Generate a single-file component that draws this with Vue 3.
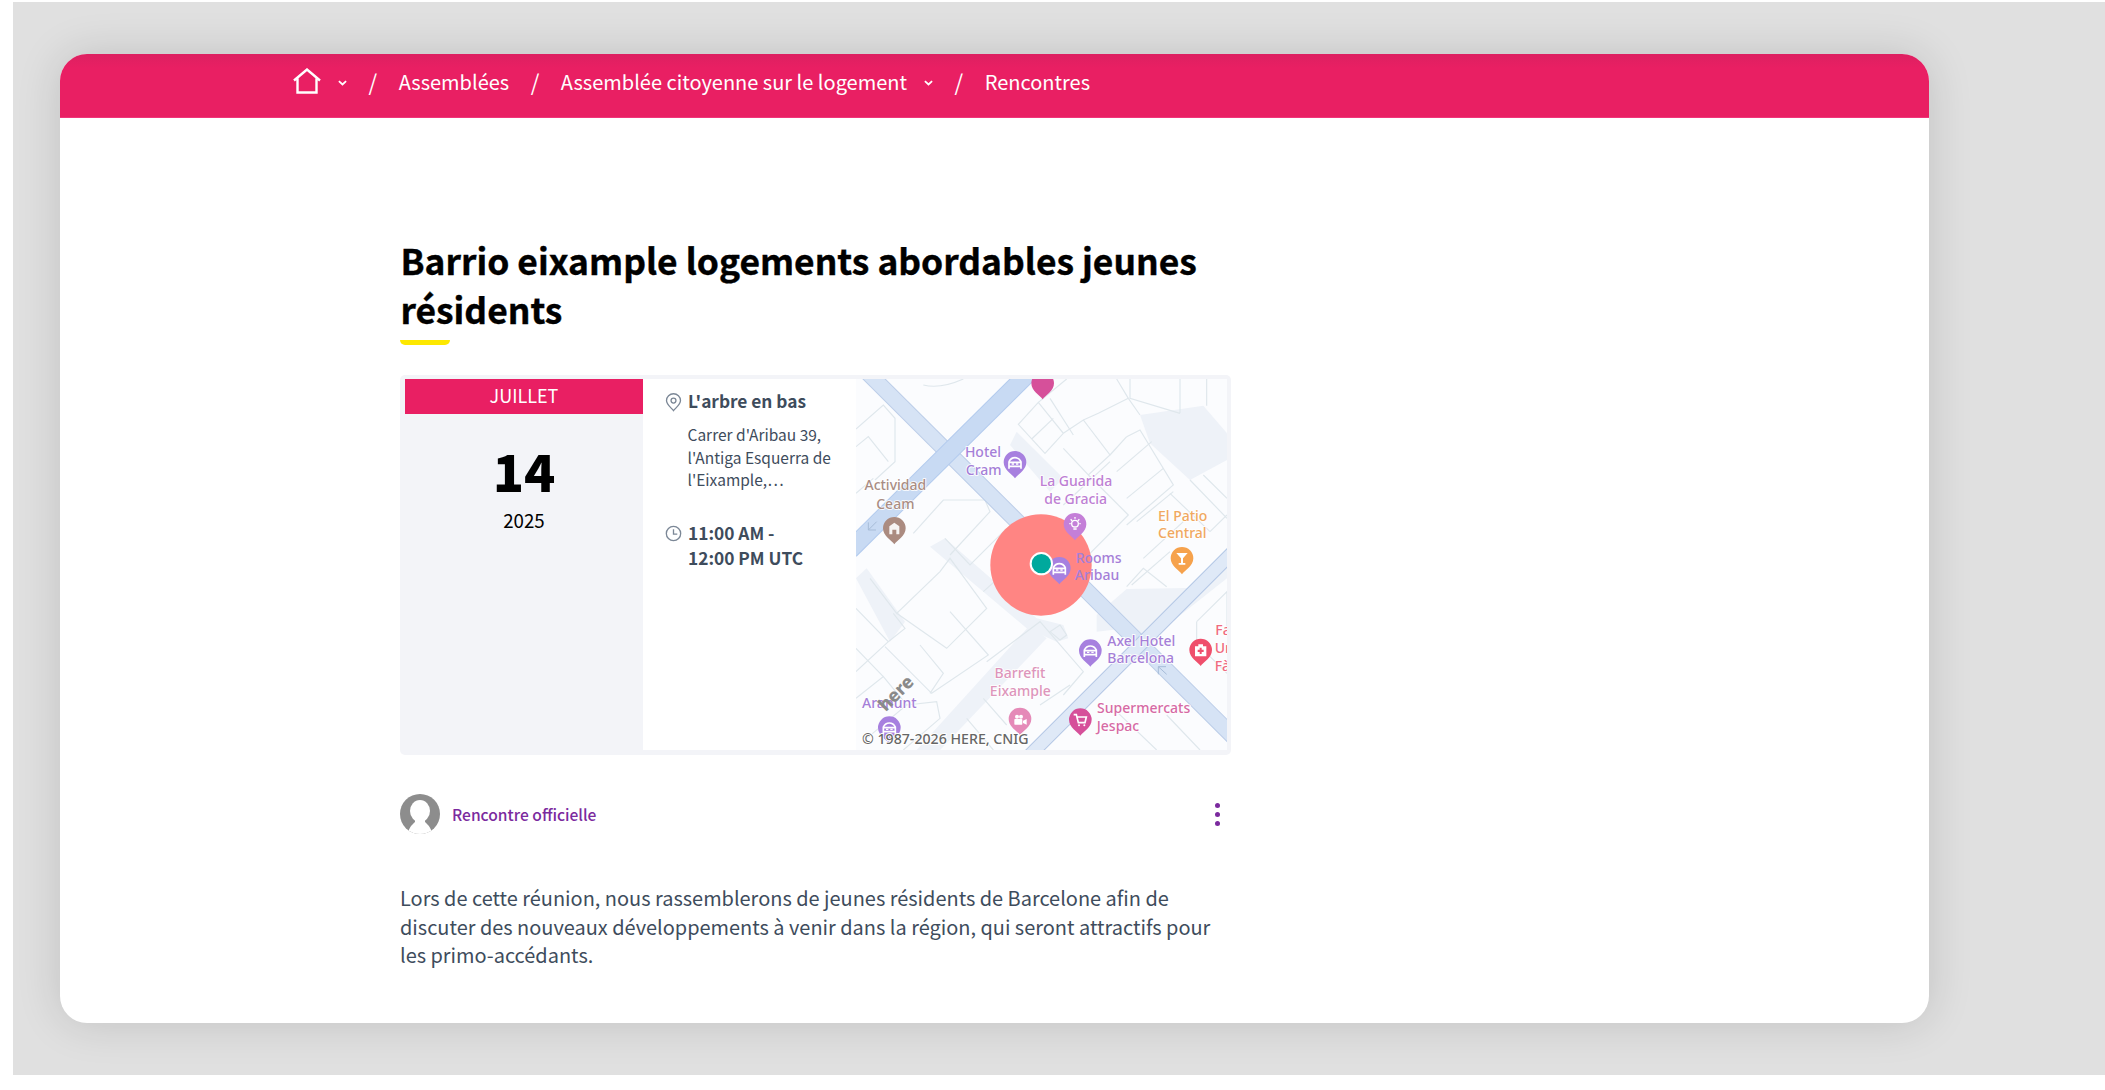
<script setup>
const pins = [
  { x: 578, y: 55, c: '#d6509a', icon: 'none' },
  { x: 495, y: 292, c: '#a780df', icon: 'bed' },
  { x: 133, y: 490, c: '#ab8b80', icon: 'house' },
  { x: 675, y: 478, c: '#c47fd8', icon: 'bulb' },
  { x: 628, y: 610, c: '#a780df', icon: 'bed' },
  { x: 996, y: 580, c: '#f6a24c', icon: 'glass' },
  { x: 721, y: 857, c: '#a780df', icon: 'bed' },
  { x: 1052, y: 855, c: '#ef4f6c', icon: 'med' },
  { x: 510, y: 1062, c: '#e58ab8', icon: 'cam' },
  { x: 691, y: 1064, c: '#d6509a', icon: 'cart' },
  { x: 118, y: 1088, c: '#a780df', icon: 'bed' }
]
const labels = [
  { t: 'Hotel', x: 399, y: 277, c: '#a57fd8' },
  { t: 'Cram', x: 401, y: 331, c: '#a57fd8' },
  { t: 'Actividad', x: 136, y: 376, c: '#a98d84' },
  { t: 'Ceam', x: 136, y: 431, c: '#a98d84' },
  { t: 'La Guarida', x: 678, y: 363, c: '#bd80d4' },
  { t: 'de Gracia', x: 677, y: 416, c: '#bd80d4' },
  { t: 'El Patio', x: 998, y: 467, c: '#f0a860' },
  { t: 'Central', x: 997, y: 520, c: '#f0a860' },
  { t: 'Axel Hotel', x: 874, y: 842, c: '#a57fd8' },
  { t: 'Barcelona', x: 872, y: 895, c: '#a57fd8' },
  { t: 'Rooms', x: 746, y: 593, c: '#a57fd8' },
  { t: 'Aribau', x: 741, y: 646, c: '#a57fd8' },
  { t: 'Fa', x: 1096, y: 810, c: '#ef6a80', a: 'start' },
  { t: 'Ur', x: 1094, y: 865, c: '#ef6a80', a: 'start' },
  { t: 'Fà', x: 1094, y: 918, c: '#ef6a80', a: 'start' },
  { t: 'Barrefit', x: 510, y: 939, c: '#dd95bb' },
  { t: 'Eixample', x: 511, y: 993, c: '#dd95bb' },
  { t: 'Supermercats', x: 881, y: 1043, c: '#d66aa5' },
  { t: 'Jespac', x: 804, y: 1097, c: '#d66aa5' },
  { t: 'Aranunt', x: 118, y: 1030, c: '#a57fd8' }
]
const pinPath = 'M0 48 C-8 36 -34 24 -34 0 A34 34 0 1 1 34 0 C34 24 8 36 0 48 Z'
</script>

<template>
  <div class="stage">
    <main class="window">
      <nav class="crumbs">
        <svg class="home" viewBox="0 0 28 26" width="28" height="26" aria-label="Accueil">
          <path d="M1 12.5 L14 1.5 L27 12.5 M4.5 10.5 V24.5 H23.5 V10.5" fill="none" stroke="#fff" stroke-width="2.4" stroke-linejoin="miter" />
        </svg>
        <svg class="chev first" viewBox="0 0 10 6" width="9" height="6"><path d="M1 1 L5 4.6 L9 1" fill="none" stroke="#fff" stroke-width="2" /></svg>
        <span class="sep">/</span>
        <span class="crumb">Assemblées</span>
        <span class="sep">/</span>
        <span class="crumb">Assemblée citoyenne sur le logement</span>
        <svg class="chev second" viewBox="0 0 10 6" width="9" height="6"><path d="M1 1 L5 4.6 L9 1" fill="none" stroke="#fff" stroke-width="2" /></svg>
        <span class="sep">/</span>
        <span class="crumb">Rencontres</span>
      </nav>

      <article class="article">
        <h1 class="title">Barrio eixample logements abordables jeunes résidents</h1>
        <div class="rule"></div>

        <section class="card">
          <div class="date">
            <div class="month">JUILLET</div>
            <div class="day">14</div>
            <div class="year">2025</div>
          </div>

          <div class="info">
            <div class="place">
              <svg class="ico" viewBox="0 0 18 20" width="17" height="19">
                <path d="M9 18.6 C6.5 15.6 1.6 12 1.6 7.9 A7.4 7.2 0 0 1 16.4 7.9 C16.4 12 11.5 15.6 9 18.6 Z" fill="none" stroke="#7b8796" stroke-width="1.4" />
                <circle cx="9" cy="8" r="2.6" fill="none" stroke="#7b8796" stroke-width="1.4" />
              </svg>
              <span>L'arbre en bas</span>
            </div>
            <div class="address">Carrer d'Aribau 39,<br />l'Antiga Esquerra de<br />l'Eixample,…</div>
            <div class="time">
              <svg class="ico" viewBox="0 0 18 18" width="17" height="17">
                <circle cx="9" cy="9" r="7.6" fill="none" stroke="#7b8796" stroke-width="1.4" />
                <path d="M9 4.4 V9.6 H13" fill="none" stroke="#7b8796" stroke-width="1.4" />
              </svg>
              <span>11:00 AM -<br />12:00 PM UTC</span>
            </div>
          </div>

          <svg class="map" viewBox="18 42 1113 1113" width="371" height="371">
            <rect x="18" y="42" width="1113" height="1113" fill="#fbfcfe" />
            <g fill="#eef2f8">
              <path d="M870 150 L1060 122 L1131 205 V285 L1020 345 L900 235 Z" />
              <path d="M240 545 L285 520 L560 760 L640 780 L655 820 L620 830 L530 790 L400 680 Z" />
              <path d="M740 750 L830 672 L1050 668 L1131 585 V640 L890 830 L830 790 L740 800 Z" />
              <path d="M540 780 L590 820 L270 1155 H200 Z" />
              <path d="M18 640 L50 610 L165 770 L120 830 Z" />
              <path d="M500 200 L640 340 L600 380 L480 240 Z" />
            </g>
            <g fill="none" stroke="#dfe7ec" stroke-width="3.5">
              <path d="M18 192 L100 120 L135 160 V290 L75 345 M18 245 L55 215 L115 290 M18 385 L70 340" />
              <path d="M220 60 C260 70 300 60 340 42 M800 42 L835 100 L870 150 M840 42 V100 L990 145 M990 42 V145 M1070 42 V122" />
              <path d="M505 178 L565 112 L640 205 L585 265 Z M565 112 L650 42 M640 205 L700 165 L780 270 L715 330 L640 250 M610 160 L545 222" />
              <path d="M600 100 L670 210 M700 165 L745 145 L835 100 M830 215 L870 195 L970 360 L830 480" />
              <path d="M780 270 L830 215 M800 320 L905 230 M830 400 L940 310 M860 470 L970 380 M640 420 L780 290 M715 330 L835 450 L720 565" />
              <path d="M1020 345 L1131 460 M1060 330 L1131 400 M960 385 L1080 500 M1080 500 L1131 450" />
              <path d="M830 665 L880 610 L950 665 M845 660 L960 560 M880 580 L1000 470" />
              <path d="M190 505 L280 405 L405 405 L420 440 L300 570 M285 520 L360 600 L470 490 M400 680 L500 590" />
              <path d="M60 640 L140 745 L270 620 L300 580 L410 730 L290 850 L140 745" />
              <path d="M18 730 L115 830 L165 790 L130 745 M115 830 L18 920 M18 850 L100 935 M105 845 L245 985 L415 870 L300 740 M210 840 L280 925 L240 985" />
              <path d="M18 1000 L100 935 L170 1020 L50 1120 M170 1020 L260 1010 L270 1060 L160 1155" />
              <path d="M410 890 L570 770 L700 920 L640 990 M570 1020 L660 960 M400 1000 L470 1080 M350 1060 L430 1155" />
              <path d="M1040 770 L1131 680 V800 M1040 770 V835 L1131 925 M800 1040 L920 1155 M950 1050 L1050 1155 M1050 1000 L1131 1090" />
              <path d="M600 800 L630 780 L650 810 L630 825 Z" />
            </g>
            <g fill="none" stroke-linecap="butt">
              <path d="M30 0 L1170 1135" stroke="#bccde8" stroke-width="50" />
              <path d="M30 0 L1170 1135" stroke="#d6e3f5" stroke-width="44" />
              <path d="M0 555 L550 10" stroke="#b3cbee" stroke-width="56" />
              <path d="M0 555 L550 10" stroke="#c8daf3" stroke-width="50" />
              <path d="M510 1200 L1170 540" stroke="#b4c7e5" stroke-width="42" />
              <path d="M510 1200 L1170 540" stroke="#dfe9f7" stroke-width="36" />
              <path d="M80 470 L55 495 M55 495 H78 M55 495 V472" stroke="#a7bcd8" stroke-width="3" />
              <path d="M925 905 L950 928 M925 905 H948 M925 905 V928" stroke="#a7bcd8" stroke-width="3" />
            </g>
            <circle cx="573" cy="600" r="152" fill="#ff8583" />
            <text v-for="l in labels" :key="l.t" class="maplabel" :class="{ over: l.t === 'Rooms' || l.t === 'Aribau' }" :x="l.x" :y="l.y" :fill="l.c" :text-anchor="l.a || 'middle'">{{ l.t }}</text>
            <g v-for="p in pins" :key="p.x" :transform="`translate(${p.x} ${p.y})`">
              <path :d="pinPath" :fill="p.c" />
              <g v-if="p.icon === 'bed'" fill="none" stroke="#fff" stroke-width="5">
                <path d="M-18 -2 C-10 -18 10 -18 18 -2 M-18 0 H18 V12 H-18 Z M-18 12 V19 M18 12 V19" />
                <path d="M-10 5 H-3 M3 5 H10" stroke-width="4" />
              </g>
              <path v-else-if="p.icon === 'house'" d="M-15 18 V-6 L0 -17 L15 -6 V18 H6 V4 H-6 V18 Z" fill="#fff" opacity=".9" />
              <g v-else-if="p.icon === 'bulb'" fill="none" stroke="#fff" stroke-width="4">
                <circle cx="0" cy="-2" r="10" />
                <path d="M-5 14 H5 M0 -22 V-17 M-17 -2 H-13 M13 -2 H17 M-13 -15 L-9 -11 M13 -15 L9 -11" />
              </g>
              <path v-else-if="p.icon === 'glass'" d="M-17 -16 H17 L3 0 V14 H10 V19 H-10 V14 H-3 V0 Z" fill="#fff" />
              <g v-else-if="p.icon === 'med'" fill="#fff">
                <path d="M-17 -11 H-7 V-17 H7 V-11 H17 V19 H-17 Z M-3 -1 H-9 V6 H-3 V12 H3 V6 H9 V-1 H3 V-7 H-3 Z" fill-rule="evenodd" />
              </g>
              <g v-else-if="p.icon === 'cam'" fill="#fff">
                <rect x="-17" y="0" width="24" height="17" rx="2" />
                <path d="M9 5 L20 0 V17 L9 12 Z" />
                <circle cx="-9" cy="-7" r="6" />
                <circle cx="3" cy="-7" r="6" />
              </g>
              <g v-else-if="p.icon === 'cart'" fill="none" stroke="#fff" stroke-width="5">
                <path d="M-20 -15 H-12 L-6 9 H14 L18 -8 H-10" />
                <circle cx="-4" cy="17" r="3" fill="#fff" stroke="none" />
                <circle cx="12" cy="17" r="3" fill="#fff" stroke="none" />
              </g>
            </g>
            <circle cx="574" cy="596" r="32" fill="#00a99d" stroke="#fff" stroke-width="6" />
            <text class="here" x="100" y="1045" transform="rotate(-45 100 1035)">here</text>
            <text class="copy" x="36" y="1138">© 1987-2026 HERE, CNIG</text>
          </svg>
        </section>

        <div class="meta">
          <svg class="avatar" viewBox="0 0 40 40" width="40" height="40">
            <defs><clipPath id="av"><circle cx="20" cy="20" r="20" /></clipPath></defs>
            <circle cx="20" cy="20" r="20" fill="#8d8d8d" />
            <g clip-path="url(#av)" fill="#fff">
              <ellipse cx="20" cy="17" rx="10" ry="11" />
              <path d="M15 25 H25 V28 C28 31 31 33 32 40 H8 C9 33 12 31 15 28 Z" />
            </g>
          </svg>
          <span class="author">Rencontre officielle</span>
          <div class="kebab" aria-label="Plus d'options"><i></i><i></i><i></i></div>
        </div>

        <p class="desc">Lors de cette réunion, nous rassemblerons de jeunes résidents de Barcelone afin de discuter des nouveaux développements à venir dans la région, qui seront attractifs pour les primo-accédants.</p>
      </article>
    </main>
  </div>
</template>

<style>
html, body { margin: 0; background: #fff; }
</style>

<style scoped>
.stage {
  margin: 2px 0 0 13px;
  height: 1073px;
  padding: 52px 0 0 47px;
  box-sizing: border-box;
  background: #e0e0e0;
  overflow: hidden;
  font-family: "Noto Sans CJK SC", "Noto Sans", sans-serif;
}
.window {
  width: 1869px;
  height: 969px;
  background: #fff;
  border-radius: 27px;
  overflow: hidden;
  box-shadow: 0 0 45px rgba(0, 0, 0, .14);
}
.crumbs {
  height: 64px;
  box-sizing: border-box;
  padding: 0 0 10px 233px;
  display: flex;
  align-items: center;
  color: #fff;
  background: linear-gradient(#dd2061, #e91f63 14px);
  box-shadow: inset 0 -1px 0 #f0357a;
  font-size: 20px;
}
.chev { margin-top: 3px; }
.chev.first { margin-left: 17px; }
.chev.second { margin-left: 17px; }
.sep {
  margin: 0 21.5px;
  font-size: 22px;
}
.article {
  width: 831px;
  margin-left: 340px;
}
.title {
  margin: 0;
  padding: 117px 0 0 .5px;
  font-size: 35.4px;
  line-height: 49px;
  font-weight: 700;
  color: #000;
  -webkit-text-stroke: .4px #000;
}
.rule {
  width: 50px;
  height: 5px;
  margin-top: 7px;
  background: #fde800;
  border-radius: 0 0 5px 5px;
}
.card {
  margin-top: 30px;
  height: 380px;
  box-sizing: border-box;
  padding: 4px 4px 5px 5px;
  background: #f3f4f8;
  border-radius: 5px;
  display: flex;
}
.date {
  width: 238px;
  text-align: center;
  color: #000;
}
.month {
  height: 35px;
  line-height: 33px;
  background: #e91f63;
  color: #fff;
  font-size: 18px;
}
.day {
  margin-top: 21px;
  font-size: 51.5px;
  line-height: 70px;
  font-weight: 900;
}
.year {
  font-size: 18.7px;
  line-height: 26px;
  margin-top: 2px;
}
.info {
  width: 213px;
  box-sizing: border-box;
  background: #fff;
  padding: 9px 0 0 22px;
  color: #3e4c5c;
}
.place, .time {
  display: flex;
  gap: 6px;
  font-size: 17.3px;
  font-weight: 600;
  line-height: 25px;
}
.ico { flex: none; margin-top: 5px; }
.address {
  margin: 10px 0 0 22px;
  padding-left: .5px;
  font-size: 15.5px;
  line-height: 22.5px;
}
.time { margin-top: 29px; }
.map { display: block; flex: none; }
.maplabel {
  font-family: "Noto Sans", sans-serif;
  font-size: 42px;
  font-weight: 500;
  paint-order: stroke;
  stroke: #fff;
  stroke-width: 5px;
}
.maplabel.over { stroke: none; }
.here {
  font-family: "Noto Sans", sans-serif;
  font-size: 54px;
  font-weight: 800;
  fill: #8a8a8a;
}
.copy {
  font-family: "Noto Sans", sans-serif;
  font-size: 42.5px;
  font-weight: 500;
  fill: #666;
  paint-order: stroke;
  stroke: #fff;
  stroke-width: 6px;
}
.meta {
  display: flex;
  align-items: center;
  height: 40px;
  margin-top: 39px;
}
.avatar { flex: none; }
.author {
  margin-left: 12px;
  font-size: 15.6px;
  font-weight: 500;
  color: #7b2a9e;
}
.kebab {
  margin-left: auto;
  margin-right: 11.5px;
  display: flex;
  flex-direction: column;
  gap: 4px;
}
.kebab i {
  display: block;
  width: 5px;
  height: 5px;
  border-radius: 50%;
  background: #7b2a9e;
}
.desc {
  margin: 50px 0 0;
  font-size: 19.95px;
  line-height: 28.5px;
  color: #3e4c5c;
}
</style>
